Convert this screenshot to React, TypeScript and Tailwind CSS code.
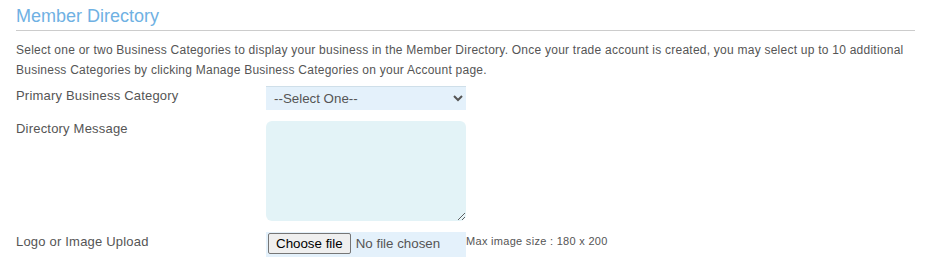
export default function App() {
  return (
    <div className="w-[944px] bg-white px-4 pt-[5px] font-['Liberation_Sans',Arial,sans-serif] text-[#555]">
      {/* section heading */}
      <div className="w-[899px]">
        <h2 className="border-b border-[#cccccc] pb-[3px] text-[18px] leading-[22px] text-[#6fb1e3]">
          Member Directory
        </h2>
        <p className="mt-[9px] text-[12px] leading-[20px] tracking-[0.24px]">
          Select one or two Business Categories to display your business in the Member Directory. Once your trade account is created, you may select up to 10 additional Business Categories by clicking Manage Business Categories on your Account page.
        </p>
      </div>

      <div className="mt-[6px] flex flex-col gap-[11px]">
        <div className="flex items-start">
          <label className="w-[250px] pt-[2px] text-[13px] leading-[16px] tracking-[0.2px]">Primary Business Category</label>
          <select className="h-[24px] w-[200px] border-t border-[#cfdfe9] bg-[#e4f1fb] pl-[4px] text-[13.33px] text-[#555] outline-none">
            <option>--Select One--</option>
          </select>
        </div>

        <div className="flex items-start">
          <label className="w-[250px] pt-[0px] text-[13px] leading-[16px] tracking-[0.2px]">Directory Message</label>
          <textarea className="h-[100px] w-[200px] rounded-[6px] bg-[#e3f3f7] outline-none" />
        </div>

        <div className="flex items-start">
          <label className="w-[250px] pt-[2px] text-[13px] leading-[16px] tracking-[0.2px]">Logo or Image Upload</label>
          <label className="flex h-[25px] w-[200px] items-start bg-[#e4f1fb] pl-[2px] pt-[1px] text-[13.33px] text-[#555]">
            <span className="h-[21px] rounded-[2px] border border-[#767676] bg-[#efefef] px-[7px] leading-[19px] text-black">
              Choose file
            </span>
            <span className="pl-[5px] leading-[21px]">No file chosen</span>
          </label>
          <span className="pt-[2px] text-[11px] leading-[14px] tracking-[0.3px]">Max image size : 180 x 200</span>
        </div>
      </div>
    </div>
  );
}
